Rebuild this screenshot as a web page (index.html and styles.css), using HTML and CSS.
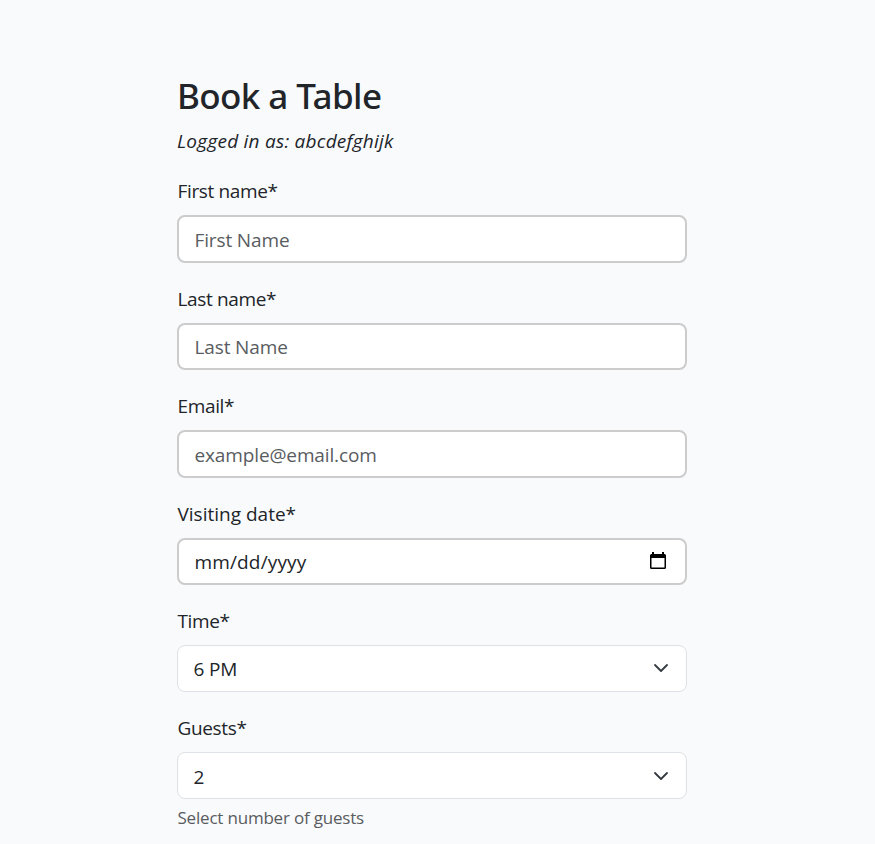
FILE: index.html
```html
<!DOCTYPE html>
<html lang="en">
<head>
<meta charset="utf-8">
<title>Book a Table</title>
<link rel="stylesheet" href="styles.css">
</head>
<body>
<main class="booking">
  <h1 class="title">Book a Table</h1>
  <p class="user">Logged in as: abcdefghijk</p>
  <form>
    <div class="group">
      <label class="label" for="first">First name*</label>
      <input class="control" id="first" type="text" placeholder="First Name">
    </div>
    <div class="group">
      <label class="label" for="last">Last name*</label>
      <input class="control" id="last" type="text" placeholder="Last Name">
    </div>
    <div class="group">
      <label class="label" for="email">Email*</label>
      <input class="control" id="email" type="email" placeholder="example@email.com">
    </div>
    <div class="group">
      <span class="label visiting">Visiting date*</span>
      <div class="control date" tabindex="0">
        <span>mm/dd/yyyy</span>
        <svg class="calendar" width="18" height="20" viewBox="0 0 18 20"><path fill="#000" fill-rule="evenodd" d="M3 1h2v2h8V1h2v2h.5A1.500 1.500 0 0 1 17 4.500v12a1.500 1.500 0 0 1-1.500 1.500h-13A1.500 1.500 0 0 1 1 16.500v-12A1.500 1.500 0 0 1 2.500 3H3zM2.500 7v9.500h13V7z"/></svg>
      </div>
    </div>
    <div class="group">
      <span class="label">Time*</span>
      <div class="control select" tabindex="0">
        <span>6 PM</span>
        <svg class="chevron" width="16" height="16" viewBox="0 0 16 16"><path d="m2 5 6 6 6-6"/></svg>
      </div>
    </div>
    <div class="group">
      <span class="label">Guests*</span>
      <div class="control select" tabindex="0">
        <span>2</span>
        <svg class="chevron" width="16" height="16" viewBox="0 0 16 16"><path d="m2 5 6 6 6-6"/></svg>
      </div>
      <small class="help">Select number of guests</small>
    </div>
  </form>
</main>
</body>
</html>
```
FILE: styles.css
```css
* { box-sizing: border-box; }
html { height: 100%; overflow: hidden; }
body {
  margin: 0;
  height: 100%;
  overflow: hidden;
  background: #f9fafc;
  color: #212529;
  font: 19px/30px "Segoe UI", "Open Sans", "Noto Sans", sans-serif;
}
.booking { width: 510px; margin-left: 177px; padding-top: 74px; }
.title { margin: 0; font-family: "Segoe UI", "Noto Sans", sans-serif; font-size: 35px; line-height: 43px; font-weight: 500; letter-spacing: -.6px; }
.user { margin: 9px 0 20.4px; font-style: italic; letter-spacing: .24px; }
.group { height: 107.4px; }
.label { display: block; height: 30px; margin-bottom: 9px; padding-left: .5px; letter-spacing: -.35px; }
.visiting { letter-spacing: 0; }
.control {
  display: flex;
  align-items: center;
  justify-content: space-between;
  width: 100%;
  height: 47.4px;
  padding: 2px 16px 0 15.5px;
  border: 2px solid #ccc;
  border-radius: 8px;
  outline: 0;
  background: #fff;
  color: #212529;
  font: inherit;
  letter-spacing: -.13px;
}
.control::placeholder { color: #595c5f; opacity: 1; }
.date { letter-spacing: .15px; }
.select { height: 47px; border: 1px solid #dee2e6; }
.calendar { margin: -2px 2px 0 0; }
.chevron { margin: -2px 1px 0 0; fill: none; stroke: #343a40; stroke-width: 1.8; stroke-linecap: round; stroke-linejoin: round; }
.help { display: block; padding: 5px 0 0 .5px; font-size: 17px; line-height: 28px; letter-spacing: -.2px; color: #595c5f; }
```
